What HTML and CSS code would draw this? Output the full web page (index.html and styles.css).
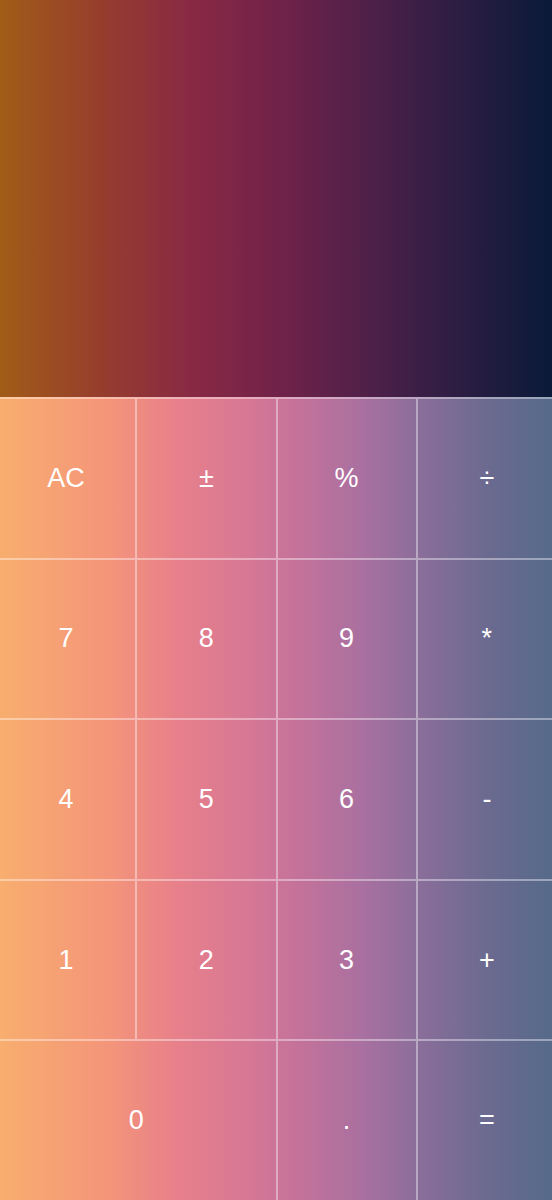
FILE: index.html
```html
<!DOCTYPE html>
<html lang="en">
<head>
<meta charset="utf-8">
<title>Calculator</title>
<link rel="stylesheet" href="styles.css">
</head>
<body>
<main class="calc">
  <section class="display"></section>
  <section class="pad">
    <div class="keys">
      <button class="key">AC</button>
      <button class="key">±</button>
      <button class="key">%</button>
      <button class="key">÷</button>
      <button class="key">7</button>
      <button class="key">8</button>
      <button class="key">9</button>
      <button class="key">*</button>
      <button class="key">4</button>
      <button class="key">5</button>
      <button class="key">6</button>
      <button class="key">-</button>
      <button class="key">1</button>
      <button class="key">2</button>
      <button class="key">3</button>
      <button class="key">+</button>
      <button class="key key-wide">0</button>
      <button class="key">.</button>
      <button class="key">=</button>
    </div>
  </section>
</main>
</body>
</html>
```
FILE: styles.css
```css
html, body {
  margin: 0;
  padding: 0;
}
body {
  width: 552px;
  height: 1200px;
  overflow: hidden;
  font-family: "Liberation Sans", Arial, sans-serif;
}
.calc {
  display: flex;
  flex-direction: column;
  height: 1200px;
}
.display {
  height: 397px;
  flex: none;
  background: linear-gradient(to right,
    #a15c17 0%,
    #953b30 20%,
    #872845 36%,
    #6e2249 52%,
    #4c2049 68%,
    #2a1d42 84%,
    #0a1a38 100%);
}
.pad {
  flex: 1;
  overflow: hidden;
  background: linear-gradient(to right,
    #f8ae6e 0%,
    #f4947a 20%,
    #e7808a 32%,
    #d87894 44%,
    #c4729a 54%,
    #a870a0 66%,
    #8a6e9a 76%,
    #6c6a90 88%,
    #566a8a 100%);
}
.keys {
  display: grid;
  grid-template-columns: repeat(4, 1fr);
  grid-template-rows: repeat(5, 1fr);
  width: 561px;
  height: 100%;
  margin-left: -5px;
}
.key {
  appearance: none;
  margin: 0;
  padding: 0;
  background: transparent;
  border: 0;
  border-top: 2px solid rgba(255, 255, 255, 0.4);
  border-left: 2px solid rgba(255, 255, 255, 0.4);
  color: #ffffff;
  font-family: "Liberation Sans", Arial, sans-serif;
  font-size: 27px;
  display: flex;
  align-items: center;
  justify-content: center;
}
.key-wide {
  grid-column: span 2;
}
```
